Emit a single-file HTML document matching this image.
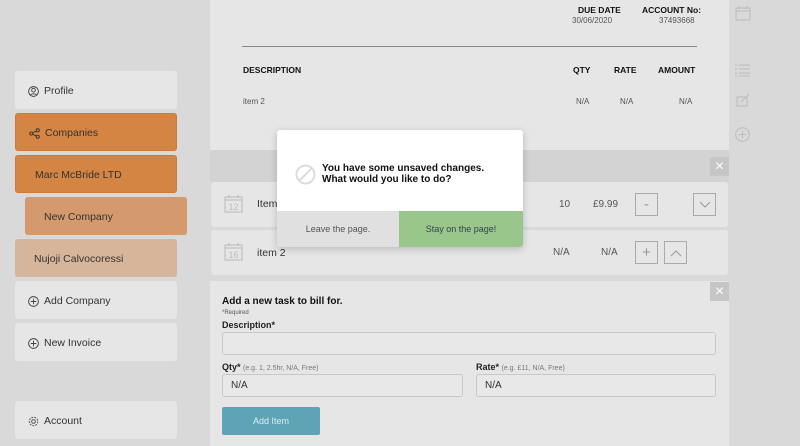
<!DOCTYPE html>
<html><head><style>
*{margin:0;padding:0;box-sizing:border-box}
body{width:800px;height:446px;background:#d9d9d9;font-family:"Liberation Sans",sans-serif;position:relative;overflow:hidden;color:#333}
.a{position:absolute}
.nav{position:absolute;left:15px;width:162px;height:38px;background:#e6e6e6;border-radius:3px;font-size:10.5px;display:flex;align-items:center;padding-left:13px;padding-top:2px;color:#333}
.nav svg{margin-right:5px}
.panel{background:#e6e6e6}
.h{font-size:8.5px;font-weight:bold;color:#111}
.t{font-size:8px;color:#555}
.xb{position:absolute;width:19px;height:19px;background:#c6c6c6;color:#fff;font-size:16px;line-height:19px;text-align:center}
.sq{position:absolute;width:23px;height:23px;border:1px solid #aaa;color:#999;text-align:center;line-height:21px;font-size:15px}
.inp{position:absolute;border:1px solid #c8c8c8;border-radius:3px;background:#e8e8e8;font-size:10px;padding-left:8px;line-height:21px;color:#333}
</style></head><body>
<div class="nav" style="top:71px"><svg width="11" height="11" viewBox="0 0 12 12" fill="none" stroke="#444" stroke-width="1"><circle cx="6" cy="6" r="5.3"/><circle cx="6" cy="4.6" r="2"/><path d="M2.5 10c1-2 6-2 7 0"/></svg>Profile</div>
<div class="nav" style="top:113px;background:#d48443;border:1px solid #d07a35"><svg width="11" height="11" viewBox="0 0 12 12" fill="none" stroke="#333" stroke-width="1"><circle cx="2.5" cy="6" r="1.7"/><circle cx="9.5" cy="2.5" r="1.7"/><circle cx="9.5" cy="9.5" r="1.7"/><path d="M4 5.2L8 3.3M4 6.8L8 8.7"/></svg>Companies</div>
<div class="nav" style="top:155px;background:#d48443;border:1px solid #d07a35;padding-left:19px">Marc McBride LTD</div>
<div class="nav" style="top:197px;left:25px;background:#d49a6e;padding-left:19px">New Company</div>
<div class="nav" style="top:239px;background:#d7b59b;padding-left:19px">Nujoji Calvocoressi</div>
<div class="nav" style="top:281px"><svg width="11" height="11" viewBox="0 0 12 12" fill="none" stroke="#444"><circle cx="6" cy="6" r="5.3"/><path d="M6 3v6M3 6h6"/></svg>Add Company</div>
<div class="nav" style="top:323px"><svg width="11" height="11" viewBox="0 0 12 12" fill="none" stroke="#444"><circle cx="6" cy="6" r="5.3"/><path d="M6 3v6M3 6h6"/></svg>New Invoice</div>
<div class="nav" style="top:401px"><svg width="11" height="11" viewBox="0 0 12 12" fill="none" stroke="#444"><circle cx="6" cy="6" r="2"/><circle cx="6" cy="6" r="4.6" stroke-dasharray="2 1.2"/></svg>Account</div>

<div class="a panel" style="left:210px;top:0;width:519px;height:150px"></div>
<div class="a h" style="left:578px;top:5px">DUE DATE</div>
<div class="a t" style="left:572px;top:16px">30/06/2020</div>
<div class="a h" style="left:642px;top:5px">ACCOUNT No:</div>
<div class="a t" style="left:659px;top:16px">37493668</div>
<div class="a" style="left:242px;top:46px;width:455px;height:1px;background:#888"></div>
<div class="a h" style="left:243px;top:65px">DESCRIPTION</div>
<div class="a h" style="left:573px;top:65px">QTY</div>
<div class="a h" style="left:614px;top:65px">RATE</div>
<div class="a h" style="left:658px;top:65px">AMOUNT</div>
<div class="a t" style="left:243px;top:97px">item 2</div>
<div class="a t" style="left:576px;top:97px">N/A</div>
<div class="a t" style="left:620px;top:97px">N/A</div>
<div class="a t" style="left:679px;top:97px">N/A</div>

<svg class="a" style="left:735px;top:6px" width="16" height="15" viewBox="0 0 16 15" fill="none" stroke="#bbb"><rect x="1" y="2" width="14" height="12" rx="1"/><path d="M1 5h14M4 0v3M12 0v3"/></svg>
<svg class="a" style="left:735px;top:64px" width="15" height="13" viewBox="0 0 15 13" fill="none" stroke="#bbb"><path d="M0 1h2M4 1h11M0 5h2M4 5h11M0 9h2M4 9h11M0 12h2M4 12h11"/></svg>
<svg class="a" style="left:736px;top:94px" width="15" height="13" viewBox="0 0 15 13" fill="none" stroke="#bbb"><rect x="1" y="3" width="10" height="9"/><path d="M5 8l8-8"/></svg>
<svg class="a" style="left:735px;top:127px" width="15" height="15" viewBox="0 0 15 15" fill="none" stroke="#bbb"><circle cx="7.5" cy="7.5" r="6.8"/><path d="M7.5 3.5v8M3.5 7.5h8"/></svg>

<div class="a" style="left:210px;top:150px;width:519px;height:32px;background:#d3d3d3"></div>
<div class="xb" style="left:710px;top:157px">×</div>
<div class="a panel" style="left:211px;top:182px;width:517px;height:45px;border-radius:3px"></div>
<div class="a panel" style="left:211px;top:230px;width:517px;height:45px;border-radius:3px"></div>
<svg class="a" style="left:224px;top:194px" width="19" height="19" viewBox="0 0 19 19" fill="none" stroke="#bbb"><rect x="1" y="3" width="17" height="15"/><path d="M1 6h17M5 1v3M14 1v3"/><text x="9.5" y="16" font-size="9" fill="#bbb" stroke="none" text-anchor="middle" font-family="Liberation Sans">12</text></svg>
<svg class="a" style="left:224px;top:242px" width="19" height="19" viewBox="0 0 19 19" fill="none" stroke="#bbb"><rect x="1" y="3" width="17" height="15"/><path d="M1 6h17M5 1v3M14 1v3"/><text x="9.5" y="16" font-size="9" fill="#bbb" stroke="none" text-anchor="middle" font-family="Liberation Sans">16</text></svg>
<div class="a" style="left:257px;top:198px;font-size:10.5px">Item</div>
<div class="a" style="left:257px;top:247px;font-size:10.5px">item 2</div>
<div class="a" style="left:559px;top:199px;font-size:10px;color:#555">10</div>
<div class="a" style="left:593px;top:199px;font-size:10px;color:#555">£9.99</div>
<div class="a" style="left:553px;top:247px;font-size:10px;color:#555">N/A</div>
<div class="a" style="left:601px;top:247px;font-size:10px;color:#555">N/A</div>
<div class="sq" style="left:635px;top:193px">-</div>
<div class="sq" style="left:693px;top:193px"><svg width="12" height="8" viewBox="0 0 12 8" fill="none" stroke="#999"><path d="M1 1l5 5 5-5"/></svg></div>
<div class="sq" style="left:635px;top:241px">+</div>
<div class="sq" style="left:664px;top:241px"><svg width="12" height="8" viewBox="0 0 12 8" fill="none" stroke="#999"><path d="M1 7l5-5 5 5"/></svg></div>

<div class="a panel" style="left:210px;top:281px;width:519px;height:165px"></div>
<div class="xb" style="left:710px;top:282px">×</div>
<div class="a" style="left:222px;top:296px;font-size:10px;font-weight:bold;color:#111">Add a new task to bill for.</div>
<div class="a" style="left:222px;top:310px;font-size:6px;color:#555">*Required</div>
<div class="a" style="left:222px;top:320px;font-size:9px;font-weight:bold;color:#222">Description*</div>
<div class="inp" style="left:222px;top:332px;width:494px;height:23px"></div>
<div class="a" style="left:222px;top:362px;font-size:9px;font-weight:bold;color:#222">Qty* <span style="font-weight:normal;font-size:7px;color:#777">(e.g. 1, 2.5hr, N/A, Free)</span></div>
<div class="a" style="left:476px;top:362px;font-size:9px;font-weight:bold;color:#222">Rate* <span style="font-weight:normal;font-size:7px;color:#777">(e.g. £11, N/A, Free)</span></div>
<div class="inp" style="left:222px;top:374px;width:241px;height:23px">N/A</div>
<div class="inp" style="left:476px;top:374px;width:240px;height:23px">N/A</div>
<div class="a" style="left:222px;top:407px;width:98px;height:28px;background:#5fa3b6;border-radius:2px;color:#dceef3;font-size:9px;text-align:center;line-height:28px">Add Item</div>

<div class="a" style="left:277px;top:130px;width:246px;height:117px;background:#fff;border-radius:3px;box-shadow:0 2px 8px rgba(0,0,0,.2);overflow:hidden">
<svg class="a" style="left:18px;top:34px" width="21" height="21" viewBox="0 0 21 21" fill="none" stroke="#ddd" stroke-width="2"><circle cx="10.5" cy="10.5" r="9"/><path d="M4 17L17 4"/></svg>
<div class="a" style="left:45px;top:33px;font-size:10px;font-weight:bold;color:#111;line-height:11px">You have some unsaved changes.<br>What would you like to do?</div>
<div class="a" style="left:0;top:81px;width:122px;height:36px;background:#e0e0e0;font-size:9px;color:#555;text-align:center;line-height:36px">Leave the page.</div>
<div class="a" style="left:122px;top:81px;width:124px;height:36px;background:#99c68a;font-size:9px;color:#345;text-align:center;line-height:36px">Stay on the page!</div>
</div>
</body></html>
